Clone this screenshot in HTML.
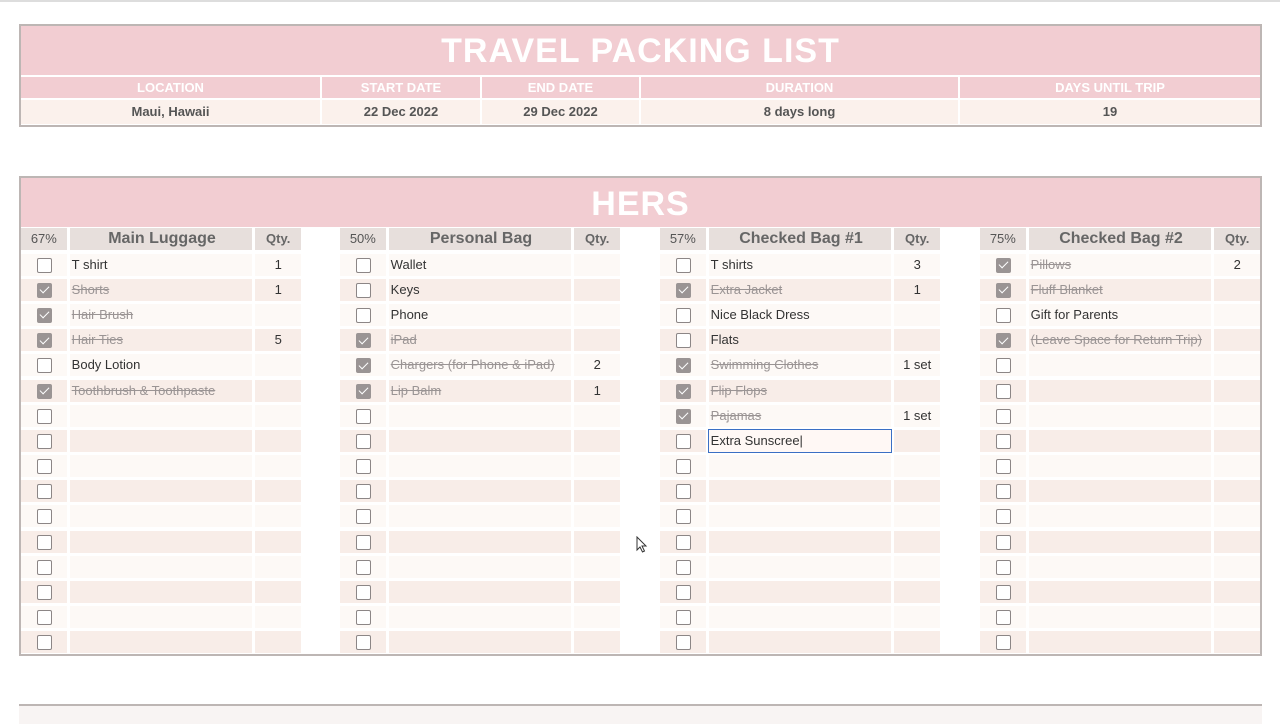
<!DOCTYPE html>
<html><head><meta charset="utf-8"><style>
*{margin:0;padding:0;box-sizing:border-box}
body{width:1280px;height:720px;background:#fff;font-family:"Liberation Sans",sans-serif;position:relative;overflow:hidden;color:#444}
.topline{position:absolute;left:0;top:0;width:1280px;height:2px;background:#ddd}
.box{position:absolute;left:19px;width:1243px;border:2px solid #bdb6b4;background:#fff}
.title{background:#f2cdd2;color:#fff;font-weight:bold;text-align:center;letter-spacing:1px}
.hrow{position:absolute;display:flex;gap:2px}
.hrow div{background:#f2cdd2;color:#fff;font-weight:bold;font-size:13px;text-align:center;line-height:21px}
.vrow{position:absolute;display:flex;gap:2px}
.vrow div{background:#fbf1ec;color:#555;font-weight:bold;font-size:13px;text-align:center;line-height:24px}
.g{position:absolute;top:228px;width:280px}
.h{display:flex;gap:3px;height:22px}
.h span{background:#e7dfdc;color:#666;font-weight:bold;text-align:center;line-height:22px}
.h .c{font-size:13px;font-weight:normal;color:#555}
.h .n{font-size:16px}
.h .q{font-size:13px}
.rows{margin-top:2px}
.r{display:flex;gap:3px;height:25.2px;padding-top:1.6px}
.r span{height:22px;background:#fdf9f6;font-size:13px;line-height:22px;color:#333}
.r:nth-child(even) span{background:#f8ede8}
.c{width:46px;position:relative}
.n{width:184px;padding-left:2px}
.q{width:46px;text-align:center}
.b{position:absolute;left:16px;top:4px;width:15px;height:15px;border:1.5px solid #8c8686;border-radius:2px;background:#fff}
.k{background:#9a9494;border-color:#9a9494}
.k:after{content:"";position:absolute;left:4px;top:0.5px;width:4px;height:8px;border:solid #fff;border-width:0 1.5px 1.5px 0;transform:rotate(45deg)}
.s{color:#9a9494!important;text-decoration:line-through}
.ed{outline:1.5px solid #3a6fc4;outline-offset:0;background:#fff8f5!important}
</style></head><body>
<div class="topline"></div>
<div class="box" style="top:24px;height:103px">
<div class="title" style="height:49px;font-size:34px;line-height:50px">TRAVEL PACKING LIST</div>
</div>
<div class="hrow" style="left:21px;top:77px"><div style="width:299px">LOCATION</div><div style="width:158px">START DATE</div><div style="width:157px">END DATE</div><div style="width:317px">DURATION</div><div style="width:300px">DAYS UNTIL TRIP</div></div>
<div class="vrow" style="left:21px;top:100px"><div style="width:299px">Maui, Hawaii</div><div style="width:158px">22 Dec 2022</div><div style="width:157px">29 Dec 2022</div><div style="width:317px">8 days long</div><div style="width:300px">19</div></div>

<div class="box" style="top:176px;height:480px">
<div class="title" style="height:49px;font-size:34px;line-height:52px">HERS</div>
</div>

<div class="g" style="left:21px">
<div class="h"><span class="c">67%</span><span class="n">Main Luggage</span><span class="q">Qty.</span></div>
<div class="rows">
<div class="r"><span class="c"><b class="b"></b></span><span class="n">T shirt</span><span class="q">1</span></div>
<div class="r"><span class="c"><b class="b k"></b></span><span class="n s">Shorts</span><span class="q">1</span></div>
<div class="r"><span class="c"><b class="b k"></b></span><span class="n s">Hair Brush</span><span class="q"></span></div>
<div class="r"><span class="c"><b class="b k"></b></span><span class="n s">Hair Ties</span><span class="q">5</span></div>
<div class="r"><span class="c"><b class="b"></b></span><span class="n">Body Lotion</span><span class="q"></span></div>
<div class="r"><span class="c"><b class="b k"></b></span><span class="n s">Toothbrush &amp; Toothpaste</span><span class="q"></span></div>
<div class="r"><span class="c"><b class="b"></b></span><span class="n"></span><span class="q"></span></div>
<div class="r"><span class="c"><b class="b"></b></span><span class="n"></span><span class="q"></span></div>
<div class="r"><span class="c"><b class="b"></b></span><span class="n"></span><span class="q"></span></div>
<div class="r"><span class="c"><b class="b"></b></span><span class="n"></span><span class="q"></span></div>
<div class="r"><span class="c"><b class="b"></b></span><span class="n"></span><span class="q"></span></div>
<div class="r"><span class="c"><b class="b"></b></span><span class="n"></span><span class="q"></span></div>
<div class="r"><span class="c"><b class="b"></b></span><span class="n"></span><span class="q"></span></div>
<div class="r"><span class="c"><b class="b"></b></span><span class="n"></span><span class="q"></span></div>
<div class="r"><span class="c"><b class="b"></b></span><span class="n"></span><span class="q"></span></div>
<div class="r"><span class="c"><b class="b"></b></span><span class="n"></span><span class="q"></span></div>
</div></div>

<div class="g" style="left:340px">
<div class="h"><span class="c">50%</span><span class="n">Personal Bag</span><span class="q">Qty.</span></div>
<div class="rows">
<div class="r"><span class="c"><b class="b"></b></span><span class="n">Wallet</span><span class="q"></span></div>
<div class="r"><span class="c"><b class="b"></b></span><span class="n">Keys</span><span class="q"></span></div>
<div class="r"><span class="c"><b class="b"></b></span><span class="n">Phone</span><span class="q"></span></div>
<div class="r"><span class="c"><b class="b k"></b></span><span class="n s">iPad</span><span class="q"></span></div>
<div class="r"><span class="c"><b class="b k"></b></span><span class="n s">Chargers (for Phone &amp; iPad)</span><span class="q">2</span></div>
<div class="r"><span class="c"><b class="b k"></b></span><span class="n s">Lip Balm</span><span class="q">1</span></div>
<div class="r"><span class="c"><b class="b"></b></span><span class="n"></span><span class="q"></span></div>
<div class="r"><span class="c"><b class="b"></b></span><span class="n"></span><span class="q"></span></div>
<div class="r"><span class="c"><b class="b"></b></span><span class="n"></span><span class="q"></span></div>
<div class="r"><span class="c"><b class="b"></b></span><span class="n"></span><span class="q"></span></div>
<div class="r"><span class="c"><b class="b"></b></span><span class="n"></span><span class="q"></span></div>
<div class="r"><span class="c"><b class="b"></b></span><span class="n"></span><span class="q"></span></div>
<div class="r"><span class="c"><b class="b"></b></span><span class="n"></span><span class="q"></span></div>
<div class="r"><span class="c"><b class="b"></b></span><span class="n"></span><span class="q"></span></div>
<div class="r"><span class="c"><b class="b"></b></span><span class="n"></span><span class="q"></span></div>
<div class="r"><span class="c"><b class="b"></b></span><span class="n"></span><span class="q"></span></div>
</div></div>

<div class="g" style="left:660px">
<div class="h"><span class="c">57%</span><span class="n">Checked Bag #1</span><span class="q">Qty.</span></div>
<div class="rows">
<div class="r"><span class="c"><b class="b"></b></span><span class="n">T shirts</span><span class="q">3</span></div>
<div class="r"><span class="c"><b class="b k"></b></span><span class="n s">Extra Jacket</span><span class="q">1</span></div>
<div class="r"><span class="c"><b class="b"></b></span><span class="n">Nice Black Dress</span><span class="q"></span></div>
<div class="r"><span class="c"><b class="b"></b></span><span class="n">Flats</span><span class="q"></span></div>
<div class="r"><span class="c"><b class="b k"></b></span><span class="n s">Swimming Clothes</span><span class="q">1 set</span></div>
<div class="r"><span class="c"><b class="b k"></b></span><span class="n s">Flip Flops</span><span class="q"></span></div>
<div class="r"><span class="c"><b class="b k"></b></span><span class="n s">Pajamas</span><span class="q">1 set</span></div>
<div class="r"><span class="c"><b class="b"></b></span><span class="n ed">Extra Sunscree|</span><span class="q"></span></div>
<div class="r"><span class="c"><b class="b"></b></span><span class="n"></span><span class="q"></span></div>
<div class="r"><span class="c"><b class="b"></b></span><span class="n"></span><span class="q"></span></div>
<div class="r"><span class="c"><b class="b"></b></span><span class="n"></span><span class="q"></span></div>
<div class="r"><span class="c"><b class="b"></b></span><span class="n"></span><span class="q"></span></div>
<div class="r"><span class="c"><b class="b"></b></span><span class="n"></span><span class="q"></span></div>
<div class="r"><span class="c"><b class="b"></b></span><span class="n"></span><span class="q"></span></div>
<div class="r"><span class="c"><b class="b"></b></span><span class="n"></span><span class="q"></span></div>
<div class="r"><span class="c"><b class="b"></b></span><span class="n"></span><span class="q"></span></div>
</div></div>

<div class="g" style="left:980px">
<div class="h"><span class="c">75%</span><span class="n">Checked Bag #2</span><span class="q">Qty.</span></div>
<div class="rows">
<div class="r"><span class="c"><b class="b k"></b></span><span class="n s">Pillows</span><span class="q">2</span></div>
<div class="r"><span class="c"><b class="b k"></b></span><span class="n s">Fluff Blanket</span><span class="q"></span></div>
<div class="r"><span class="c"><b class="b"></b></span><span class="n">Gift for Parents</span><span class="q"></span></div>
<div class="r"><span class="c"><b class="b k"></b></span><span class="n s">(Leave Space for Return Trip)</span><span class="q"></span></div>
<div class="r"><span class="c"><b class="b"></b></span><span class="n"></span><span class="q"></span></div>
<div class="r"><span class="c"><b class="b"></b></span><span class="n"></span><span class="q"></span></div>
<div class="r"><span class="c"><b class="b"></b></span><span class="n"></span><span class="q"></span></div>
<div class="r"><span class="c"><b class="b"></b></span><span class="n"></span><span class="q"></span></div>
<div class="r"><span class="c"><b class="b"></b></span><span class="n"></span><span class="q"></span></div>
<div class="r"><span class="c"><b class="b"></b></span><span class="n"></span><span class="q"></span></div>
<div class="r"><span class="c"><b class="b"></b></span><span class="n"></span><span class="q"></span></div>
<div class="r"><span class="c"><b class="b"></b></span><span class="n"></span><span class="q"></span></div>
<div class="r"><span class="c"><b class="b"></b></span><span class="n"></span><span class="q"></span></div>
<div class="r"><span class="c"><b class="b"></b></span><span class="n"></span><span class="q"></span></div>
<div class="r"><span class="c"><b class="b"></b></span><span class="n"></span><span class="q"></span></div>
<div class="r"><span class="c"><b class="b"></b></span><span class="n"></span><span class="q"></span></div>
</div></div>

<div style="position:absolute;left:19px;top:704px;width:1243px;height:20px;border-top:2px solid #bdb6b4;background:#f8f4f3"></div>
<svg style="position:absolute;left:636px;top:536px" width="12" height="18" viewBox="0 0 12 18"><path d="M1 1 L1 14 L4 11 L6.5 16 L8.5 15 L6 10 L10 10 Z" fill="#fff" stroke="#333" stroke-width="1"/></svg>
</body></html>
